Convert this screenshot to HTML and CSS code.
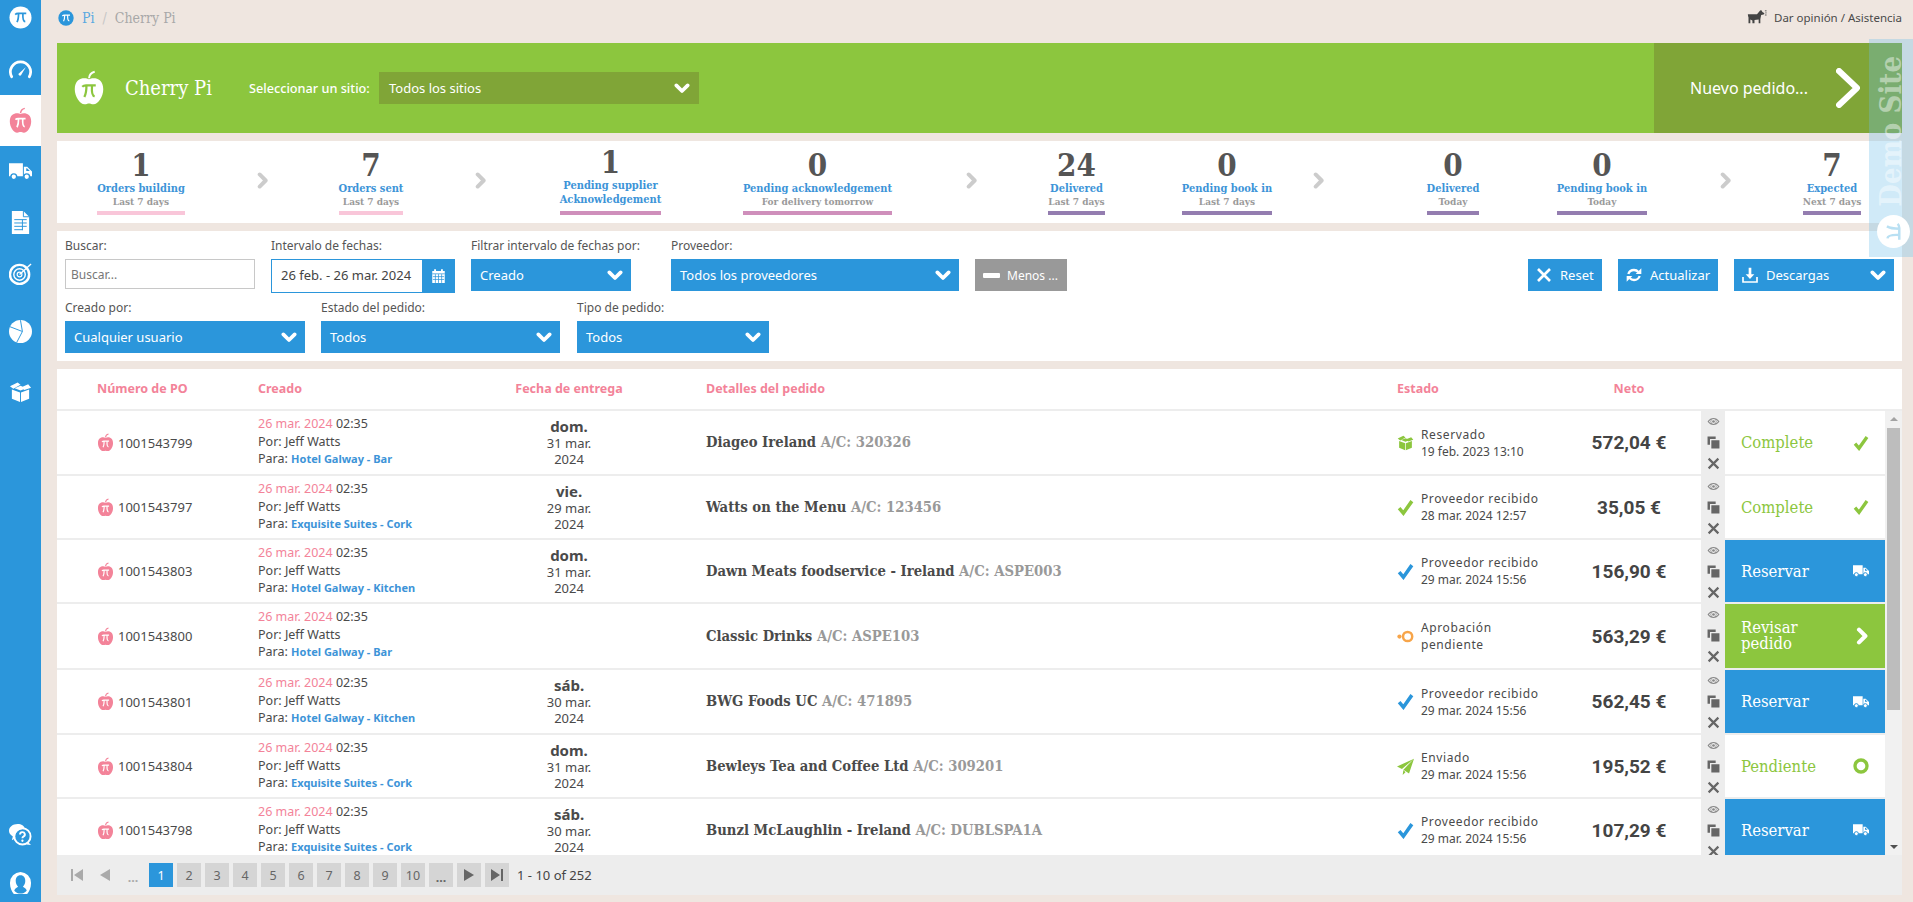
FILE: index.html
```html
<!DOCTYPE html>
<html lang="es">
<head>
<meta charset="utf-8">
<title>Cherry Pi</title>
<link rel="stylesheet" href="styles.css">
</head>
<body>
<svg class="defs" width="0" height="0" aria-hidden="true">
  <symbol id="i-apple" viewBox="0 0 24 24">
    <path fill="currentColor" d="M12 6.200C9.500 4.800 2.500 4.800 2.500 12.800c0 5 3.500 10 6.500 10 1.300 0 2-.5 3-.5s1.700.5 3 .5c3 0 6.500-5 6.500-10 0-8-7-8-9.500-6.600z"/>
    <path fill="none" stroke="currentColor" stroke-width="1.300" d="M12 5.500c.2-2 1.500-3.800 3.800-4.300"/>
    <path fill="none" style="stroke:var(--pi,#fff)" stroke-width="1.500" d="M7.500 11.200c.8-.8 1.500-.9 2.500-.9h6.500M10.300 10.300c0 3.500-.5 6-1.400 7.700M14 10.300c-.2 3-.2 7 1.800 7.200"/>
  </symbol>
  <symbol id="i-pi" viewBox="0 0 24 24">
    <circle cx="12" cy="12" r="11.500" fill="currentColor"/>
    <path fill="none" style="stroke:var(--pi,#fff)" stroke-width="1.800" d="M6.500 9c.9-1 1.800-1.200 3-1.200h8.500M10 7.800c0 4-.5 7-1.700 9M14.500 7.800c-.2 4-.2 8.300 2.500 8.600"/>
  </symbol>
  <symbol id="i-truck" viewBox="0 0 24 24">
    <path fill="currentColor" d="M0 3.500h14.500v13.500H0zM15.500 7h3.500l5 5v5h-8.500z"/>
    <circle cx="5" cy="17.500" r="3" fill="currentColor" style="stroke:var(--hole,#2b96db)" stroke-width="1.500"/>
    <circle cx="18.500" cy="17.500" r="3" fill="currentColor" style="stroke:var(--hole,#2b96db)" stroke-width="1.500"/>
    <path style="fill:var(--hole,#2b96db)" d="M18 8.500h.8l3 3h-3.800z"/>
  </symbol>
  <symbol id="i-check" viewBox="0 0 24 24">
    <path fill="none" stroke="currentColor" stroke-width="5" d="M3 13l6 7L21 3"/>
  </symbol>
  <symbol id="i-box" viewBox="0 0 24 24">
    <path fill="currentColor" d="M3 10l8.500 3v10L3 19.500zM21 10l-8.500 3v10l8.500-3.500zM1 6.500l8-4 3 2.500-7.500 4zM23 8l-7 2.500-3-3 7-3zM12 6l6 2.500-6 2.500-6-2.500z"/>
  </symbol>
  <symbol id="i-x" viewBox="0 0 24 24">
    <path fill="none" stroke="currentColor" stroke-width="4" d="M3 3l18 18M21 3L3 21"/>
  </symbol>
  <symbol id="i-eye" viewBox="0 0 24 24">
    <path fill="currentColor" fill-rule="evenodd" d="M1 12c3-4.500 7-6.500 11-6.500s8 2 11 6.500c-3 4.500-7 6.500-11 6.500S4 16.500 1 12zm11-4.500a4.500 4.500 0 1 0 0 9 4.500 4.500 0 0 0 0-9zM3.500 12c1.200 1.500 2.500 2.600 4 3.400a6 6 0 0 1 0-6.800c-1.500.8-2.800 1.900-4 3.400zm17 0c-1.200-1.500-2.500-2.600-4-3.400a6 6 0 0 1 0 6.800c1.500-.8 2.800-1.900 4-3.400z"/>
    <circle cx="12" cy="12" r="2.500" fill="currentColor"/>
  </symbol>
  <symbol id="i-copy" viewBox="0 0 24 24">
    <path fill="currentColor" d="M8 8h15v15H8zM1 1h15v4.500H5.500V16H1z"/>
  </symbol>
  <symbol id="i-chev" viewBox="0 0 24 24">
    <path fill="none" stroke="currentColor" stroke-width="5.500" stroke-linecap="round" stroke-linejoin="round" d="M3.500 8l8.500 8.500L20.500 8"/>
  </symbol>
  <symbol id="i-right" viewBox="0 0 24 24">
    <path fill="none" stroke="currentColor" stroke-width="5.500" stroke-linecap="round" stroke-linejoin="round" d="M8 3.500l8.500 8.500L8 20.500"/>
  </symbol>
</svg>

<div class="app">
  <nav class="sidebar">
    <div class="nav-item nav-logo"><svg class="ic-nav ic-logo" viewBox="0 0 24 24"><use href="#i-pi"/></svg></div>
    <div class="nav-item nav-gauge">
      <svg class="ic-nav" viewBox="0 0 24 24"><path fill="none" stroke="currentColor" stroke-width="2.800" stroke-linecap="round" d="M2.800 18.500a10.500 10.500 0 1 1 18.400 0"/><path fill="currentColor" d="M17.500 8.500l-5 8.500c-.8 1.200-3.200 0-2.500-1.500z"/></svg>
    </div>
    <div class="nav-item active"><svg class="ic-nav ic-active" viewBox="0 0 24 24"><use href="#i-apple"/></svg></div>
    <div class="nav-item"><svg class="ic-nav" viewBox="0 0 24 24"><use href="#i-truck"/></svg></div>
    <div class="nav-item">
      <svg class="ic-nav" viewBox="0 0 24 24"><path fill="currentColor" d="M3 0h12l6 6v18H3z"/><path fill="none" stroke="#2b96db" stroke-width="1" d="M15 0v6h6M5.500 9h13M5.500 12.500h13M5.500 16h13M5.500 19.500h9M14 9v11"/></svg>
    </div>
    <div class="nav-item">
      <svg class="ic-nav" viewBox="0 0 24 24"><g fill="none" stroke="currentColor"><circle cx="11" cy="13" r="10" stroke-width="2.600"/><circle cx="11" cy="13" r="6" stroke-width="1.500"/><circle cx="11" cy="13" r="2.500" stroke-width="1.200"/><path stroke-width="1.400" d="M11 13L23 2"/></g></svg>
    </div>
    <div class="nav-item nav-pie">
      <svg class="ic-nav" viewBox="0 0 24 24"><circle cx="12" cy="12" r="12" fill="currentColor"/><path fill="none" stroke="#2b96db" stroke-width="1" d="M12 0l0 .5 2 11.500L8 23.500M14 12L1 7"/></svg>
    </div>
    <div class="nav-item nav-box"><svg class="ic-nav" viewBox="0 0 24 24"><use href="#i-box"/></svg></div>
    <div class="nav-bottom">
      <div class="nav-help">
        <svg class="ic-nav" viewBox="0 0 24 24"><path fill="currentColor" d="M9 1c4 0 7 2 7.500 5C10 6 5.500 10 6.500 16L3 18l1-4C1 12 0 10 0 8c0-4 4-7 9-7z"/><circle cx="14" cy="14" r="8.500" fill="none" stroke="currentColor" stroke-width="2"/><path fill="none" stroke="currentColor" stroke-width="2" d="M11.500 12a2.500 2.500 0 1 1 3.500 2.300c-.8.400-1 .8-1 1.700"/><circle cx="14" cy="18.500" r="1.200" fill="currentColor"/><path fill="currentColor" d="M20 20l3 3-5-.5z"/></svg>
      </div>
      <div class="nav-user">
        <svg class="ic-nav" viewBox="0 0 24 24"><path fill="currentColor" fill-rule="evenodd" d="M12 1a11.500 11.500 0 0 1 11 11.500c0 5-2 9-4 11.500H5C3 21.500 1 17.500 1 12.500A11.500 11.500 0 0 1 12 1zm0 3.500c-3.500 0-5 2.800-5 6 0 3 1.500 5 2.500 6-1.500 1-3.500 2-4 4 2 2 4 3 6.500 3s4.500-1 6.500-3c-.5-2-2.500-3-4-4 1-1 2.500-3 2.500-6 0-3.200-1.500-6-5-6z"/></svg>
      </div>
    </div>
  </nav>

  <main class="main">
    <header class="topbar">
      <div class="crumbs">
        <svg class="ic-crumb" viewBox="0 0 24 24"><use href="#i-pi"/></svg>
        <a class="crumb-link">Pi</a><span class="crumb-sep">/</span><span class="crumb-cur">Cherry Pi</span>
      </div>
      <div class="help-link">
        <svg class="ic-dog" viewBox="0 0 24 18"><path fill="#444" d="M1 5h11l3-3.500c.5-1 1.500-1.500 2.500-1l1 2 2.500 1.500-1 1.500-3 .5-1 5V16h-2v-4.500l-5 .5V16H6.500v-3.500L4 11.500V16H1.800V9C1.500 8 1 6.500 1 5z"/><path fill="none" stroke="#444" stroke-width="1" d="M21.500 1h2M22 3.500h1.500M21.500 6h2"/></svg>
        <span>Dar opinión / Asistencia</span>
      </div>
    </header>

    <section class="banner">
      <svg class="ic-banner" viewBox="0 0 24 24"><use href="#i-apple"/></svg>
      <h1 class="banner-title">Cherry Pi</h1>
      <label class="banner-label">Seleccionar un sitio:</label>
      <div class="banner-select"><span>Todos los sitios</span><svg class="ic-chev" viewBox="0 0 24 24"><use href="#i-chev"/></svg></div>
      <div class="banner-new">
        <span>Nuevo pedido...</span>
        <svg class="ic-bigchev" viewBox="0 0 24 40"><path fill="none" stroke="#fff" stroke-width="6" stroke-linecap="round" stroke-linejoin="round" d="M3 3l18 17L3 37"/></svg>
      </div>
    </section>

    <section class="kpis">
      <div class="kpi"><b class="kpi-n">1</b><span class="kpi-t">Orders building</span><span class="kpi-s">Last 7 days</span><i class="kpi-bar bar-pink"></i></div>
      <div class="kpi-arrow"><svg viewBox="0 0 24 24"><use href="#i-right"/></svg></div>
      <div class="kpi"><b class="kpi-n">7</b><span class="kpi-t">Orders sent</span><span class="kpi-s">Last 7 days</span><i class="kpi-bar bar-pink"></i></div>
      <div class="kpi-arrow"><svg viewBox="0 0 24 24"><use href="#i-right"/></svg></div>
      <div class="kpi"><b class="kpi-n">1</b><span class="kpi-t">Pending supplier</span><span class="kpi-t">Acknowledgement</span><i class="kpi-bar bar-mauve"></i></div>
      <div class="kpi"><b class="kpi-n">0</b><span class="kpi-t">Pending acknowledgement</span><span class="kpi-s">For delivery tomorrow</span><i class="kpi-bar bar-mauve"></i></div>
      <div class="kpi-arrow"><svg viewBox="0 0 24 24"><use href="#i-right"/></svg></div>
      <div class="kpi"><b class="kpi-n">24</b><span class="kpi-t">Delivered</span><span class="kpi-s">Last 7 days</span><i class="kpi-bar bar-purple"></i></div>
      <div class="kpi"><b class="kpi-n">0</b><span class="kpi-t">Pending book in</span><span class="kpi-s">Last 7 days</span><i class="kpi-bar bar-purple"></i></div>
      <div class="kpi-arrow"><svg viewBox="0 0 24 24"><use href="#i-right"/></svg></div>
      <div class="kpi"><b class="kpi-n">0</b><span class="kpi-t">Delivered</span><span class="kpi-s">Today</span><i class="kpi-bar bar-purple"></i></div>
      <div class="kpi"><b class="kpi-n">0</b><span class="kpi-t">Pending book in</span><span class="kpi-s">Today</span><i class="kpi-bar bar-purple"></i></div>
      <div class="kpi-arrow"><svg viewBox="0 0 24 24"><use href="#i-right"/></svg></div>
      <div class="kpi"><b class="kpi-n">7</b><span class="kpi-t">Expected</span><span class="kpi-s">Next 7 days</span><i class="kpi-bar bar-purple"></i></div>
    </section>

    <section class="filters">
      <div class="filter-row">
        <div class="field w-search"><label>Buscar:</label><input class="input" placeholder="Buscar..."></div>
        <div class="field w-date"><label>Intervalo de fechas:</label>
          <div class="date"><span class="date-text">26 feb. - 26 mar. 2024</span><span class="date-btn"><svg viewBox="0 0 24 24"><path fill="#fff" d="M2 4h3V1h3v3h8V1h3v3h3v19H2z"/><path fill="none" stroke="#2b96db" stroke-width="1.200" d="M2 8.500h20M7 9v14M12 9v14M17 9v14M3 13h18M3 17.500h18"/></svg></span></div>
        </div>
        <div class="field w-creado"><label>Filtrar intervalo de fechas por:</label><div class="select"><span>Creado</span><svg class="ic-chev" viewBox="0 0 24 24"><use href="#i-chev"/></svg></div></div>
        <div class="field w-prov"><label>Proveedor:</label><div class="select"><span>Todos los proveedores</span><svg class="ic-chev" viewBox="0 0 24 24"><use href="#i-chev"/></svg></div></div>
        <div class="field w-less"><label>&nbsp;</label><div class="btn btn-grey"><i class="minus"></i><span>Menos ...</span></div></div>
        <div class="field w-reset"><label>&nbsp;</label><div class="btn"><svg class="ic-btn" viewBox="0 0 24 24"><use href="#i-x"/></svg><span>Reset</span></div></div>
        <div class="field w-refresh"><label>&nbsp;</label><div class="btn"><svg class="ic-btn" viewBox="0 0 24 24"><path fill="none" stroke="#fff" stroke-width="3.500" d="M3.500 10.500C5 6 8.500 4.500 12 4.500c3 0 5 1.200 6.500 3M20.500 13.500C19 18 15.500 19.500 12 19.500c-3 0-5-1.200-6.500-3"/><path fill="#fff" d="M23 2v8.500h-8.500zM1 22v-8.500h8.500z"/></svg><span>Actualizar</span></div></div>
        <div class="field w-dl"><label>&nbsp;</label><div class="btn btn-dl"><svg class="ic-btn" viewBox="0 0 24 24"><path fill="#fff" d="M10 1h4v10h4.500L12 18l-6.500-7H10z"/><path fill="none" stroke="#fff" stroke-width="2.500" d="M1.500 15v7.500h21V15"/></svg><span>Descargas</span><svg class="ic-chev chev-right" viewBox="0 0 24 24"><use href="#i-chev"/></svg></div></div>
      </div>
      <div class="filter-row">
        <div class="field w-user"><label>Creado por:</label><div class="select"><span>Cualquier usuario</span><svg class="ic-chev" viewBox="0 0 24 24"><use href="#i-chev"/></svg></div></div>
        <div class="field w-state"><label>Estado del pedido:</label><div class="select"><span>Todos</span><svg class="ic-chev" viewBox="0 0 24 24"><use href="#i-chev"/></svg></div></div>
        <div class="field w-type"><label>Tipo de pedido:</label><div class="select"><span>Todos</span><svg class="ic-chev" viewBox="0 0 24 24"><use href="#i-chev"/></svg></div></div>
      </div>
    </section>

    <section class="list">
      <div class="thead">
        <div class="th th-po">Número de PO</div>
        <div class="th">Creado</div>
        <div class="th th-c">Fecha de entrega</div>
        <div class="th th-d">Detalles del pedido</div>
        <div class="th">Estado</div>
        <div class="th th-c">Neto</div>
      </div>
      <div class="body-wrap">
        <div class="rows">

          <div class="row r63">
            <div class="c-po"><svg class="ic-po" viewBox="0 0 24 24"><use href="#i-apple"/></svg>1001543799</div>
            <div class="c-created"><div><span class="pink">26 mar. 2024</span> 02:35</div><div>Por: Jeff Watts</div><div>Para: <a class="site">Hotel Galway - Bar</a></div></div>
            <div class="c-date"><b>dom.</b><span>31 mar.</span><span>2024</span></div>
            <div class="c-detail">Diageo Ireland <span class="ac">A/C: 320326</span></div>
            <div class="c-status"><svg class="ic-st green" viewBox="0 0 24 24"><use href="#i-box"/></svg><div><div class="st-name">Reservado</div><div>19 feb. 2023 13:10</div></div></div>
            <div class="c-net">572,04 €</div>
            <div class="c-tools"><svg class="t-eye" viewBox="0 0 24 24"><use href="#i-eye"/></svg><svg class="t-copy" viewBox="0 0 24 24"><use href="#i-copy"/></svg><svg class="t-x" viewBox="0 0 24 24"><use href="#i-x"/></svg></div>
            <div class="c-act act-plain"><span>Complete</span><svg class="ic-act" viewBox="0 0 24 24"><use href="#i-check"/></svg></div>
          </div>

          <div class="row">
            <div class="c-po"><svg class="ic-po" viewBox="0 0 24 24"><use href="#i-apple"/></svg>1001543797</div>
            <div class="c-created"><div><span class="pink">26 mar. 2024</span> 02:35</div><div>Por: Jeff Watts</div><div>Para: <a class="site">Exquisite Suites - Cork</a></div></div>
            <div class="c-date"><b>vie.</b><span>29 mar.</span><span>2024</span></div>
            <div class="c-detail">Watts on the Menu <span class="ac">A/C: 123456</span></div>
            <div class="c-status"><svg class="ic-st green" viewBox="0 0 24 24"><use href="#i-check"/></svg><div><div class="st-name">Proveedor recibido</div><div>28 mar. 2024 12:57</div></div></div>
            <div class="c-net">35,05 €</div>
            <div class="c-tools"><svg class="t-eye" viewBox="0 0 24 24"><use href="#i-eye"/></svg><svg class="t-copy" viewBox="0 0 24 24"><use href="#i-copy"/></svg><svg class="t-x" viewBox="0 0 24 24"><use href="#i-x"/></svg></div>
            <div class="c-act act-plain"><span>Complete</span><svg class="ic-act" viewBox="0 0 24 24"><use href="#i-check"/></svg></div>
          </div>

          <div class="row">
            <div class="c-po"><svg class="ic-po" viewBox="0 0 24 24"><use href="#i-apple"/></svg>1001543803</div>
            <div class="c-created"><div><span class="pink">26 mar. 2024</span> 02:35</div><div>Por: Jeff Watts</div><div>Para: <a class="site">Hotel Galway - Kitchen</a></div></div>
            <div class="c-date"><b>dom.</b><span>31 mar.</span><span>2024</span></div>
            <div class="c-detail">Dawn Meats foodservice - Ireland <span class="ac">A/C: ASPE003</span></div>
            <div class="c-status"><svg class="ic-st blue" viewBox="0 0 24 24"><use href="#i-check"/></svg><div><div class="st-name">Proveedor recibido</div><div>29 mar. 2024 15:56</div></div></div>
            <div class="c-net">156,90 €</div>
            <div class="c-tools"><svg class="t-eye" viewBox="0 0 24 24"><use href="#i-eye"/></svg><svg class="t-copy" viewBox="0 0 24 24"><use href="#i-copy"/></svg><svg class="t-x" viewBox="0 0 24 24"><use href="#i-x"/></svg></div>
            <div class="c-act act-blue"><span>Reservar</span><svg class="ic-act" viewBox="0 0 24 24"><use href="#i-truck"/></svg></div>
          </div>

          <div class="row r64">
            <div class="c-po"><svg class="ic-po" viewBox="0 0 24 24"><use href="#i-apple"/></svg>1001543800</div>
            <div class="c-created"><div><span class="pink">26 mar. 2024</span> 02:35</div><div>Por: Jeff Watts</div><div>Para: <a class="site">Hotel Galway - Bar</a></div></div>
            <div class="c-date"></div>
            <div class="c-detail">Classic Drinks <span class="ac">A/C: ASPE103</span></div>
            <div class="c-status"><svg class="ic-st orange" viewBox="0 0 24 24"><circle cx="15" cy="12" r="6.500" fill="none" stroke="currentColor" stroke-width="3.500"/><circle cx="3.500" cy="12" r="3" fill="currentColor"/></svg><div><div class="st-name">Aprobación</div><div class="st-name">pendiente</div></div></div>
            <div class="c-net">563,29 €</div>
            <div class="c-tools"><svg class="t-eye" viewBox="0 0 24 24"><use href="#i-eye"/></svg><svg class="t-copy" viewBox="0 0 24 24"><use href="#i-copy"/></svg><svg class="t-x" viewBox="0 0 24 24"><use href="#i-x"/></svg></div>
            <div class="c-act act-green"><span class="act-wrap">Revisar pedido</span><svg class="ic-act ic-act-r" viewBox="0 0 24 24"><use href="#i-right"/></svg></div>
          </div>

          <div class="row r63">
            <div class="c-po"><svg class="ic-po" viewBox="0 0 24 24"><use href="#i-apple"/></svg>1001543801</div>
            <div class="c-created"><div><span class="pink">26 mar. 2024</span> 02:35</div><div>Por: Jeff Watts</div><div>Para: <a class="site">Hotel Galway - Kitchen</a></div></div>
            <div class="c-date"><b>sáb.</b><span>30 mar.</span><span>2024</span></div>
            <div class="c-detail">BWG Foods UC <span class="ac">A/C: 471895</span></div>
            <div class="c-status"><svg class="ic-st blue" viewBox="0 0 24 24"><use href="#i-check"/></svg><div><div class="st-name">Proveedor recibido</div><div>29 mar. 2024 15:56</div></div></div>
            <div class="c-net">562,45 €</div>
            <div class="c-tools"><svg class="t-eye" viewBox="0 0 24 24"><use href="#i-eye"/></svg><svg class="t-copy" viewBox="0 0 24 24"><use href="#i-copy"/></svg><svg class="t-x" viewBox="0 0 24 24"><use href="#i-x"/></svg></div>
            <div class="c-act act-blue"><span>Reservar</span><svg class="ic-act" viewBox="0 0 24 24"><use href="#i-truck"/></svg></div>
          </div>

          <div class="row">
            <div class="c-po"><svg class="ic-po" viewBox="0 0 24 24"><use href="#i-apple"/></svg>1001543804</div>
            <div class="c-created"><div><span class="pink">26 mar. 2024</span> 02:35</div><div>Por: Jeff Watts</div><div>Para: <a class="site">Exquisite Suites - Cork</a></div></div>
            <div class="c-date"><b>dom.</b><span>31 mar.</span><span>2024</span></div>
            <div class="c-detail">Bewleys Tea and Coffee Ltd <span class="ac">A/C: 309201</span></div>
            <div class="c-status"><svg class="ic-st green" viewBox="0 0 24 24"><path fill="currentColor" d="M24 1L0 12l7 3.500zM24 1L9 16.500l8 5.500zM9 17l-1 7 4-4z"/></svg><div><div class="st-name">Enviado</div><div>29 mar. 2024 15:56</div></div></div>
            <div class="c-net">195,52 €</div>
            <div class="c-tools"><svg class="t-eye" viewBox="0 0 24 24"><use href="#i-eye"/></svg><svg class="t-copy" viewBox="0 0 24 24"><use href="#i-copy"/></svg><svg class="t-x" viewBox="0 0 24 24"><use href="#i-x"/></svg></div>
            <div class="c-act act-plain"><span>Pendiente</span><svg class="ic-act" viewBox="0 0 24 24"><circle cx="12" cy="12" r="9" fill="none" stroke="currentColor" stroke-width="5"/></svg></div>
          </div>

          <div class="row">
            <div class="c-po"><svg class="ic-po" viewBox="0 0 24 24"><use href="#i-apple"/></svg>1001543798</div>
            <div class="c-created"><div><span class="pink">26 mar. 2024</span> 02:35</div><div>Por: Jeff Watts</div><div>Para: <a class="site">Exquisite Suites - Cork</a></div></div>
            <div class="c-date"><b>sáb.</b><span>30 mar.</span><span>2024</span></div>
            <div class="c-detail">Bunzl McLaughlin - Ireland <span class="ac">A/C: DUBLSPA1A</span></div>
            <div class="c-status"><svg class="ic-st blue" viewBox="0 0 24 24"><use href="#i-check"/></svg><div><div class="st-name">Proveedor recibido</div><div>29 mar. 2024 15:56</div></div></div>
            <div class="c-net">107,29 €</div>
            <div class="c-tools"><svg class="t-eye" viewBox="0 0 24 24"><use href="#i-eye"/></svg><svg class="t-copy" viewBox="0 0 24 24"><use href="#i-copy"/></svg><svg class="t-x" viewBox="0 0 24 24"><use href="#i-x"/></svg></div>
            <div class="c-act act-blue"><span>Reservar</span><svg class="ic-act" viewBox="0 0 24 24"><use href="#i-truck"/></svg></div>
          </div>

        </div>
        <div class="scrollbar"><i class="sb-up"></i><i class="sb-thumb"></i><i class="sb-down"></i></div>
      </div>
      <div class="pager">
        <span class="pg pg-off"><svg viewBox="0 0 12 12"><path fill="currentColor" d="M0 0h2v12H0zM12 0v12L3 6z"/></svg></span>
        <span class="pg pg-off"><svg viewBox="0 0 12 12"><path fill="currentColor" d="M11 0v12L1 6z"/></svg></span>
        <span class="pg pg-off pg-dots">...</span>
        <span class="pg pg-on">1</span>
        <span class="pg">2</span><span class="pg">3</span><span class="pg">4</span><span class="pg">5</span><span class="pg">6</span><span class="pg">7</span><span class="pg">8</span><span class="pg">9</span><span class="pg">10</span>
        <span class="pg pg-more">...</span>
        <span class="pg"><svg viewBox="0 0 12 12"><path fill="currentColor" d="M1 0v12l10-6z"/></svg></span>
        <span class="pg"><svg viewBox="0 0 12 12"><path fill="currentColor" d="M0 0v12l9-6zM10 0h2v12h-2z"/></svg></span>
        <span class="pg-info">1 - 10 of 252</span>
      </div>
    </section>
  </main>
</div>

<aside class="demo">
  <span class="demo-text">Demo Site</span>
  <svg class="demo-pi" viewBox="0 0 24 24"><circle cx="12" cy="12" r="12" fill="#fff"/><path fill="none" stroke="#b9e0f3" stroke-width="1.800" d="M15 6.500c1 .9 1.200 1.800 1.200 3V18M16.200 10c-4 0-7-.5-9-1.700M16.200 14.500c-4-.2-8.300-.2-8.600 2.500"/></svg>
</aside>
</body>
</html>
```
FILE: styles.css
```css
* { box-sizing: border-box; }
html, body { margin: 0; padding: 0; height: 100%; overflow: hidden; }
body {
  background: #efe6e0;
  color: #4a4a4a;
  font-family: "Noto Sans", "Open Sans", sans-serif;
  font-size: 12px;
}
.defs { position: absolute; }
a { color: inherit; text-decoration: none; }

.app { display: flex; height: 902px; }

/* sidebar */
.sidebar {
  width: 41px; flex: none;
  background: #2b96db; color: #fff;
  display: flex; flex-direction: column;
}
.nav-item { height: 51px; display: flex; align-items: center; justify-content: center; flex: none; }
.nav-logo { height: 34px; margin-bottom: 11px; }
.nav-gauge { height: 50px; }
.nav-pie { height: 64px; }
.nav-box { height: 56px; }
.active { background: #fff; }
.ic-nav { width: 23px; height: 23px; display: block; }
.ic-logo { color: #fff; --pi: #2b96db; }
.ic-active { color: #f38399; --pi: #fff; width: 27px; height: 27px; }
.nav-bottom { margin-top: auto; padding-bottom: 5px; }
.nav-help { height: 48px; display: flex; align-items: center; justify-content: center; margin-bottom: 9px; }
.nav-user { height: 30px; display: flex; align-items: center; justify-content: center; }

/* main */
.main { flex: 1; padding: 0 11px 7px 16px; display: flex; flex-direction: column; min-width: 0; }

.topbar { height: 43px; flex: none; display: flex; align-items: center; justify-content: space-between; padding-bottom: 7px; }
.crumbs { display: flex; align-items: center; font-family: "DejaVu Serif Condensed", "DejaVu Serif", serif; font-size: 14px; }
.ic-crumb { width: 16px; height: 16px; color: #2b96db; margin: 0 8px 0 1px; --pi: #fff; }
.crumb-link { color: #5aa9e0; }
.crumb-sep { color: #c5c5c5; margin: 0 8px; }
.crumb-cur { color: #a8a8a8; }
.help-link { display: flex; align-items: center; font-size: 11.500px; margin-top: -1px; }
.ic-dog { width: 20px; height: 15px; margin-right: 7px; }

/* banner */
.banner { height: 90px; flex: none; background: #8cc63e; color: #fff; display: flex; align-items: center; }
.ic-banner { width: 36px; height: 36px; margin-left: 14px; color: #fff; --pi: #8cc63e; flex: none; }
.banner-title {
  margin: 0 0 0 18px; width: 124px; flex: none;
  font-family: "DejaVu Serif Condensed", "DejaVu Serif", serif;
  font-weight: 400; font-size: 20px;
}
.banner-label { font-size: 12.700px; font-weight: 500; width: 130px; flex: none; white-space: nowrap; }
.banner-select {
  width: 320px; height: 32px; background: #80a537; flex: none;
  display: flex; align-items: center; justify-content: space-between;
  padding: 0 9px 0 10px; font-size: 13px;
}
.ic-chev { width: 16px; height: 16px; color: #fff; flex: none; }
.banner-new {
  margin-left: auto; width: 248px; height: 90px; background: #80a537;
  display: flex; align-items: center; padding-left: 36px; font-size: 16px;
}
.ic-bigchev { width: 24px; height: 40px; margin-left: 28px; }

/* kpis */
.kpis {
  margin-top: 8px; height: 82px; flex: none; background: #fff;
  padding-left: 29px;
  display: grid;
  grid-template-columns: 110px 132px 86px 132px 129px 285px 22px 189px 112px 70px 200px 98px 148px 66px;
}
.kpi {
  display: grid; grid-template-columns: max-content;
  justify-content: center; align-content: end; justify-items: center;
  padding-bottom: 8px; text-align: center; white-space: nowrap;
  font-family: "DejaVu Serif Condensed", "DejaVu Serif", serif;
}
.kpi-n { font-size: 31px; line-height: 33px; color: #555; font-weight: 700; }
.kpi-t { font-size: 11px; line-height: 14px; color: #3d94d8; font-weight: 700; }
.kpi-s { font-size: 10px; line-height: 11px; color: #9a9a9a; font-weight: 700; }
.kpi-bar { display: block; justify-self: stretch; height: 4px; margin-top: 4px; }
.bar-pink { background: #f9c6d9; }
.bar-mauve { background: #cf8fbb; }
.bar-purple { background: #947db0; }
.kpi-arrow { display: flex; align-items: center; justify-content: center; color: #ccc; padding-bottom: 3px; }
.kpi-arrow svg { width: 17px; height: 17px; }

/* filters */
.filters { margin-top: 8px; height: 130px; flex: none; background: #fff; padding: 8px; }
.filter-row { display: flex; }
.filter-row + .filter-row { margin-top: 10px; }
.field { flex: none; white-space: nowrap; }
.field label { display: block; height: 14px; line-height: 14px; margin-bottom: 6px; font-size: 12px; color: #555; }
.w-search { width: 190px; margin-right: 16px; }
.w-date { width: 184px; margin-right: 16px; }
.w-creado { width: 160px; margin-right: 40px; }
.w-prov { width: 288px; margin-right: 16px; }
.w-less { width: 92px; margin-right: auto; }
.w-reset { width: 74px; margin-right: 16px; }
.w-refresh { width: 100px; margin-right: 16px; }
.w-dl { width: 160px; }
.w-user { width: 240px; margin-right: 16px; }
.w-state { width: 239px; margin-right: 17px; }
.w-type { width: 192px; }
.input {
  display: block; width: 190px; height: 30px; margin-top: 1px;
  border: 1px solid #c8c8c8; background: #fff; padding: 0 5px;
  font: 12px "Noto Sans", sans-serif; color: #555;
}
.input::placeholder { color: #777; opacity: 1; }
.date { display: flex; height: 34px; margin-bottom: -2px; border: 1px solid #2b96db; }
.date-text { flex: 1; padding-left: 9px; line-height: 31px; font-size: 13px; color: #444; }
.date-btn { width: 32px; background: #2b96db; display: flex; align-items: center; justify-content: center; }
.date-btn svg { width: 15px; height: 16px; }
.select, .btn {
  height: 32px; background: #2b96db; color: #fff; display: flex; align-items: center;
  font-size: 13px;
}
.select { justify-content: space-between; padding: 0 8px 0 9px; }
.btn { padding-left: 8px; }
.btn-grey { background: #999; font-size: 12px; padding-left: 8px; }
.minus { width: 17px; height: 5px; background: #fff; border-radius: 1px; margin-right: 7px; }
.ic-btn { width: 16px; height: 16px; color: #fff; margin-right: 8px; flex: none; }
.chev-right { margin-left: auto; margin-right: 8px; }

/* list */
.list { margin-top: 8px; flex: 1; min-height: 0; background: #fff; display: flex; flex-direction: column; }
.thead, .row {
  display: grid;
  grid-template-columns: 201px 223px 176px 740px 160px 144px 24px 160px;
}
.thead {
  height: 42px; flex: none; border-bottom: 2px solid #ededed;
  align-items: center; padding-bottom: 2px;
  grid-template-columns: 201px 223px 176px 740px 160px 144px;
}
.th { color: #f38399; font-weight: 700; font-size: 12.500px; white-space: nowrap; }
.th-po { padding-left: 40px; }
.th-c { text-align: center; }
.th-d { padding-left: 49px; }

.body-wrap { flex: 1; min-height: 0; display: flex; overflow: hidden; }
.rows { flex: 1; min-width: 0; overflow: hidden; background: #ededed; }
.row { height: 62px; margin-bottom: 2px; background: #fff; overflow: hidden; }
.r63 { height: 63px; }
.r64 { height: 64px; }
.row > div { display: flex; align-items: center; min-width: 0; }
.c-po { padding-left: 39px; font-size: 13px; }
.ic-po { width: 19px; height: 19px; color: #f38399; --pi: #fff; margin-right: 3px; flex: none; }
.row > .c-created { display: block; padding-top: 4px; line-height: 17.500px; font-size: 12.500px; white-space: nowrap; }
.pink { color: #f38399; }
.site { color: #3d94d8; font-weight: 700; font-size: 11px; }
.row > .c-date { flex-direction: column; justify-content: flex-start; padding-top: 6px; font-size: 13px; line-height: 16px; }
.c-date b { font-size: 15px; line-height: 18px; }
.c-detail {
  padding: 0 0 2px 49px; white-space: pre-wrap;
  font-family: "DejaVu Serif Condensed", "DejaVu Serif", serif;
  font-size: 14.700px; font-weight: 700; color: #4a4a4a;
}
.ac { color: #999; }
.c-status { font-size: 12px; line-height: 17px; gap: 7px; white-space: nowrap; }
.st-name { letter-spacing: .6px; }
.ic-st { width: 17px; height: 17px; flex: none; }
.green { color: #8cc63e; }
.blue { color: #2b96db; }
.orange { color: #f7a54a; }
.c-net { justify-content: center; font-family: Roboto, sans-serif; font-weight: 700; font-size: 19px; color: #444; }
.row > .c-tools { background: #ededed; flex-direction: column; justify-content: flex-start; padding-top: 4px; }
.t-eye { width: 13px; height: 13px; color: #888; }
.t-copy { width: 13px; height: 13px; color: #666; margin-top: 8px; }
.t-x { width: 13px; height: 13px; color: #666; margin-top: 8px; }
.c-act {
  justify-content: space-between; padding: 0 16px;
  font-family: "DejaVu Serif Condensed", "DejaVu Serif", serif; font-size: 16.500px;
}
.act-plain { color: #8cc63e; }
.act-blue { background: #2b96db; color: #fff; --hole: #2b96db; }
.act-green { background: #8cc63e; color: #fff; }
.act-wrap { width: 80px; line-height: 16px; }
.ic-act { width: 16px; height: 16px; flex: none; }
.ic-act-r { width: 18px; height: 18px; margin-right: -2px; }

.scrollbar { width: 17px; flex: none; background: #f1f1f1; display: flex; flex-direction: column; align-items: center; padding: 6px 0; }
.sb-up { width: 0; height: 0; border: 4px solid transparent; border-top: 0; border-bottom: 4px solid #a3a3a3; }
.sb-thumb { width: 13px; height: 282px; background: #bdbdbd; margin-top: 7px; }
.sb-down { width: 0; height: 0; border: 4px solid transparent; border-bottom: 0; border-top: 4px solid #505050; margin-top: auto; }

.pager { height: 40px; flex: none; background: #ededed; display: flex; align-items: center; gap: 4px; padding-left: 8px; }
.pg { width: 24px; height: 24px; background: #d5d5d5; color: #666; display: flex; align-items: center; justify-content: center; font-size: 12.500px; }
.pg svg { width: 12px; height: 12px; }
.pg-off { background: transparent; color: #aaa; }
.pg-dots { font-weight: 700; padding-top: 5px; }
.pg-on { background: #2b96db; color: #fff; }
.pg-more { font-weight: 700; padding-top: 5px; }
.pg-info { margin-left: 4px; font-size: 13px; color: #444; }

/* demo ribbon */
.demo {
  position: absolute; left: 1869px; top: 39px; width: 44px; height: 218px;
  background: rgba(110, 190, 232, .32);
  display: flex; flex-direction: column; align-items: center;
}
.demo-text {
  writing-mode: vertical-rl; transform: rotate(180deg);
  font-family: "DejaVu Serif Condensed", "DejaVu Serif", serif;
  font-weight: 700; font-size: 29px; line-height: 32px; color: rgba(255, 255, 255, .45);
  margin-top: 17px; white-space: nowrap;
}
.demo-pi { position: absolute; left: 8px; top: 176px; width: 33px; height: 33px; }
```
